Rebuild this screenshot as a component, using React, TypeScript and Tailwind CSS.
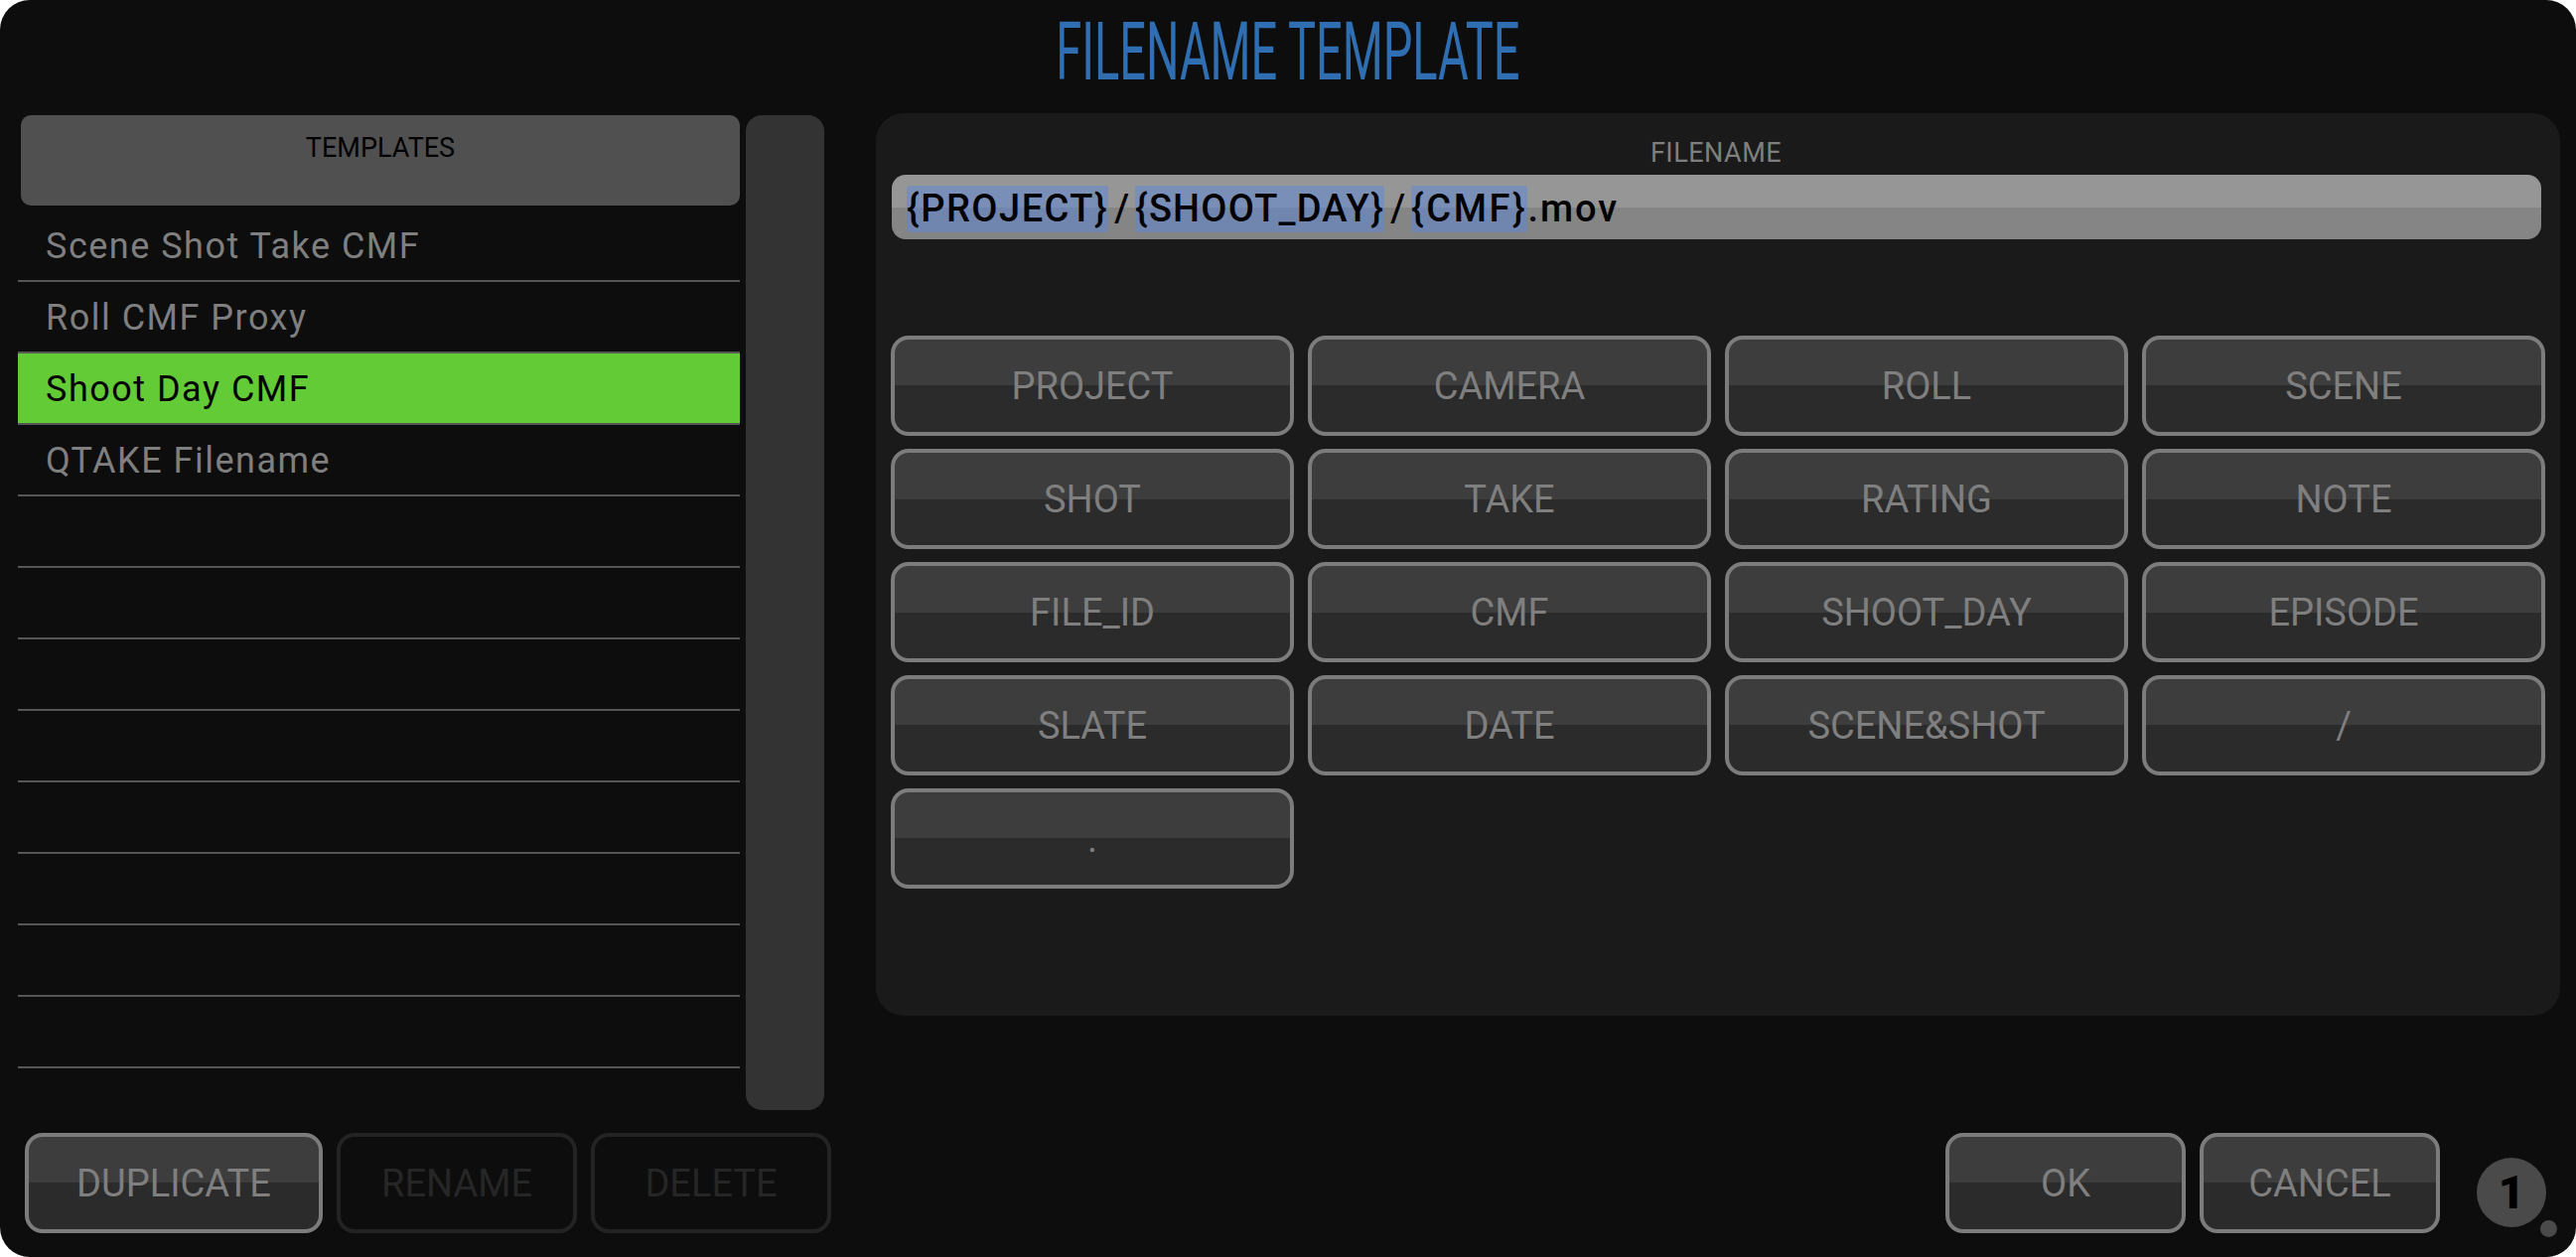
const font = "font-['Roboto',sans-serif]";

const templates = ['Scene Shot Take CMF', 'Roll CMF Proxy', 'Shoot Day CMF', 'QTAKE Filename', '', '', '', '', '', '', '', ''];

const tokens = [
  ['PROJECT', 'CAMERA', 'ROLL', 'SCENE'],
  ['SHOT', 'TAKE', 'RATING', 'NOTE'],
  ['FILE_ID', 'CMF', 'SHOOT_DAY', 'EPISODE'],
  ['SLATE', 'DATE', 'SCENE&SHOT', '/'],
  ['.'],
];

function Button({ label, width, disabled }: { label: string; width: string; disabled?: boolean }) {
  return (
    <div
      className={
        width +
        ' h-[101px] shrink-0 flex items-center justify-center rounded-[18px] border-4 text-[38px] leading-none font-normal ' +
        (disabled
          ? 'border-[#232323] text-[#262626]'
          : 'border-[#7c7c7c] text-[#7f7f7f] bg-[linear-gradient(to_bottom,#3d3d3d_50%,#2b2b2b_50%)]')
      }
    >
      {label}
    </div>
  );
}

function Token({ children, spacing }: { children: string; spacing: string }) {
  return <span className={'bg-[#5e88d8]/50 rounded-[3px] h-[47px] flex items-center ' + spacing}>{children}</span>;
}

export default function App() {
  return (
    <div className={'w-[2594px] h-[1266px] bg-white overflow-hidden ' + font}>
      <div className="h-full rounded-[30px] bg-[#0d0d0d] flex flex-col">
        <div className="h-[114px] shrink-0 pl-[1067px] pt-[7px]">
          <div className="w-[459px] h-[90px] flex items-center justify-center">
            <span className="text-[81px] leading-none font-normal text-[#2f6eb0] whitespace-nowrap scale-x-[0.58]">
              FILENAME TEMPLATE
            </span>
          </div>
        </div>

        <div className="flex flex-1">
          <div className="w-[882px] shrink-0 flex flex-col pt-[2px]">
            <div className="flex h-[1002px] pl-[18px]">
              <div className="w-[727px] flex flex-col">
                <div className="ml-[3px] h-[91px] shrink-0 rounded-[10px] bg-[#505050] flex justify-center pt-[20px] text-[27px] leading-none text-black font-normal">
                  TEMPLATES
                </div>
                <div className="h-[5px] shrink-0" />
                {templates.map((name, i) => (
                  <div
                    key={i}
                    className={
                      'h-[72px] shrink-0 border-b-2 border-[#555555] pl-[28px] pt-[2px] flex items-center text-[36px] leading-none tracking-[1.5px] font-normal ' +
                      (name === 'Shoot Day CMF' ? 'bg-[#62cb36] text-black' : 'text-[#7f7f7f]')
                    }
                  >
                    {name}
                  </div>
                ))}
              </div>
              <div className="ml-[6px] w-[79px] rounded-[16px] bg-[#333333]" />
            </div>
            <div className="flex gap-[14px] pl-[25px] pt-[23px]">
              <Button label="DUPLICATE" width="w-[300px]" />
              <Button label="RENAME" width="w-[242px]" disabled />
              <Button label="DELETE" width="w-[242px]" disabled />
            </div>
          </div>

          <div className="flex-1 flex flex-col">
            <div className="w-[1696px] h-[909px] rounded-[28px] bg-[#1a1a1a] pl-[15px] pr-[19px]">
              <div className="h-[62px] flex items-center justify-center pt-[19px] text-[27px] leading-none tracking-[0.5px] text-[#7f7f7f] font-normal">
                FILENAME
              </div>
              <div className="ml-[1px] h-[65px] rounded-[14px] bg-[linear-gradient(to_bottom,#969696_50%,#858585_50%)] pl-[15px] pt-[3px] flex items-center text-[38px] leading-none text-black font-medium">
                <Token spacing="tracking-[1.5px]">{'{PROJECT}'}</Token>
                <span className="px-[6px]">/</span>
                <Token spacing="tracking-[1.2px]">{'{SHOOT_DAY}'}</Token>
                <span className="px-[6px]">/</span>
                <Token spacing="tracking-[2.6px]">{'{CMF}'}</Token>
                <span className="tracking-[2px]">.mov</span>
              </div>
              <div className="mt-[97px] flex flex-col gap-[13px]">
                {tokens.map((row, i) => (
                  <div key={i} className="flex gap-[14px]">
                    {row.map(t => (
                      <Button key={t} label={t} width="w-[406px]" />
                    ))}
                  </div>
                ))}
              </div>
            </div>
            <div className="flex pt-[118px] pl-[1077px]">
              <div className="flex gap-[14px]">
                <Button label="OK" width="w-[242px]" />
                <Button label="CANCEL" width="w-[242px]" />
              </div>
              <div className="ml-[37px] mt-[25px] w-[70px] h-[70px] rounded-full bg-[#4a4a4a] flex items-center justify-center text-[46px] font-black leading-none text-black relative">
                1
                <div className="absolute left-[64px] top-[63px] w-[17px] h-[17px] rounded-full bg-[#4a4a4a]" />
              </div>
            </div>
          </div>
        </div>
      </div>
    </div>
  );
}
